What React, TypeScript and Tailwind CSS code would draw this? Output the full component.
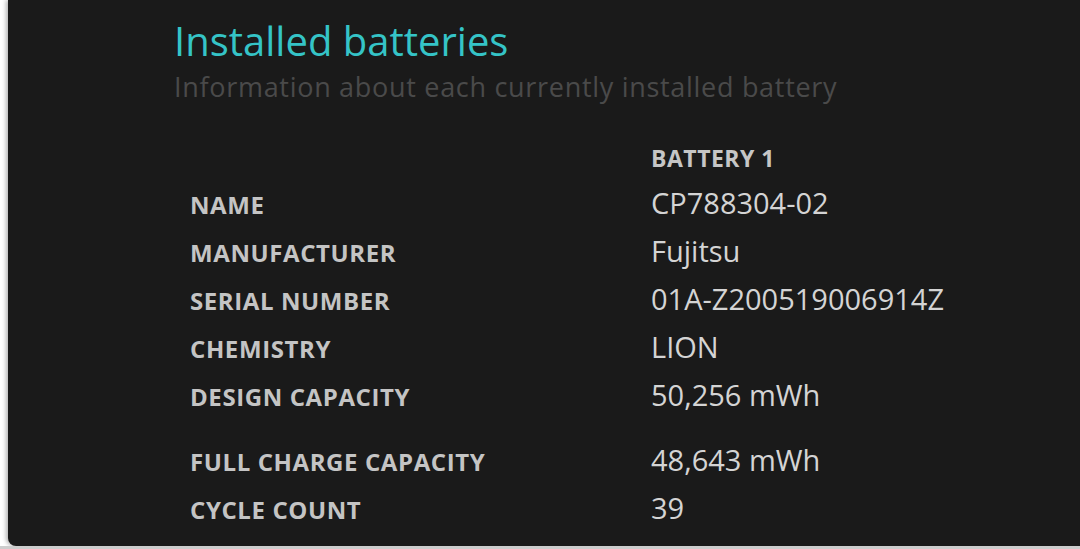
import React from "react";

const rows: { label: string; value: string; gapBefore?: boolean }[] = [
  { label: "NAME", value: "CP788304-02" },
  { label: "MANUFACTURER", value: "Fujitsu" },
  { label: "SERIAL NUMBER", value: "01A-Z200519006914Z" },
  { label: "CHEMISTRY", value: "LION" },
  { label: "DESIGN CAPACITY", value: "50,256 mWh" },
  { label: "FULL CHARGE CAPACITY", value: "48,643 mWh", gapBefore: true },
  { label: "CYCLE COUNT", value: "39" },
];

export default function App() {
  return (
    <div
      className="w-[1080px] h-[549px] bg-white flex flex-col overflow-hidden"
      style={{ fontFamily: '"Open Sans", "Noto Sans", sans-serif' }}
    >
      <div className="flex-1 flex pl-[8px]">
        <div className="flex-1 bg-[#1a1a1a] rounded-bl-[8px] pl-[166px] pt-[17px] shadow-[-2px_0_4px_rgba(0,0,0,0.3)]">
          <div className="text-[40px] leading-[48px] text-[#35c4c7]">Installed batteries</div>
          <div className="mt-[6px] text-[27px] leading-[32px] tracking-[0.7px] text-[#4a4a4a]">
            Information about each currently installed battery
          </div>
          <div className="mt-[33px] pl-[16px]">
            <div className="flex h-[45px] items-center">
              <div className="w-[461px]" />
              <div className="text-[23px] font-bold tracking-[0.5px] text-[#c6c6c6]">BATTERY 1</div>
            </div>
            {rows.map((r) => (
              <div
                key={r.label}
                className={`flex h-[48px] items-center ${r.gapBefore ? "mt-[17px]" : ""}`}
              >
                <div className="w-[461px] text-[24px] font-bold tracking-[0.6px] text-[#c4c4c4]">
                  {r.label}
                </div>
                <div className="text-[29px] text-[#d4d4d4] -mt-[5px]">{r.value}</div>
              </div>
            ))}
          </div>
        </div>
      </div>
      <div className="h-[3px] bg-[#cdcdcd]" />
    </div>
  );
}
